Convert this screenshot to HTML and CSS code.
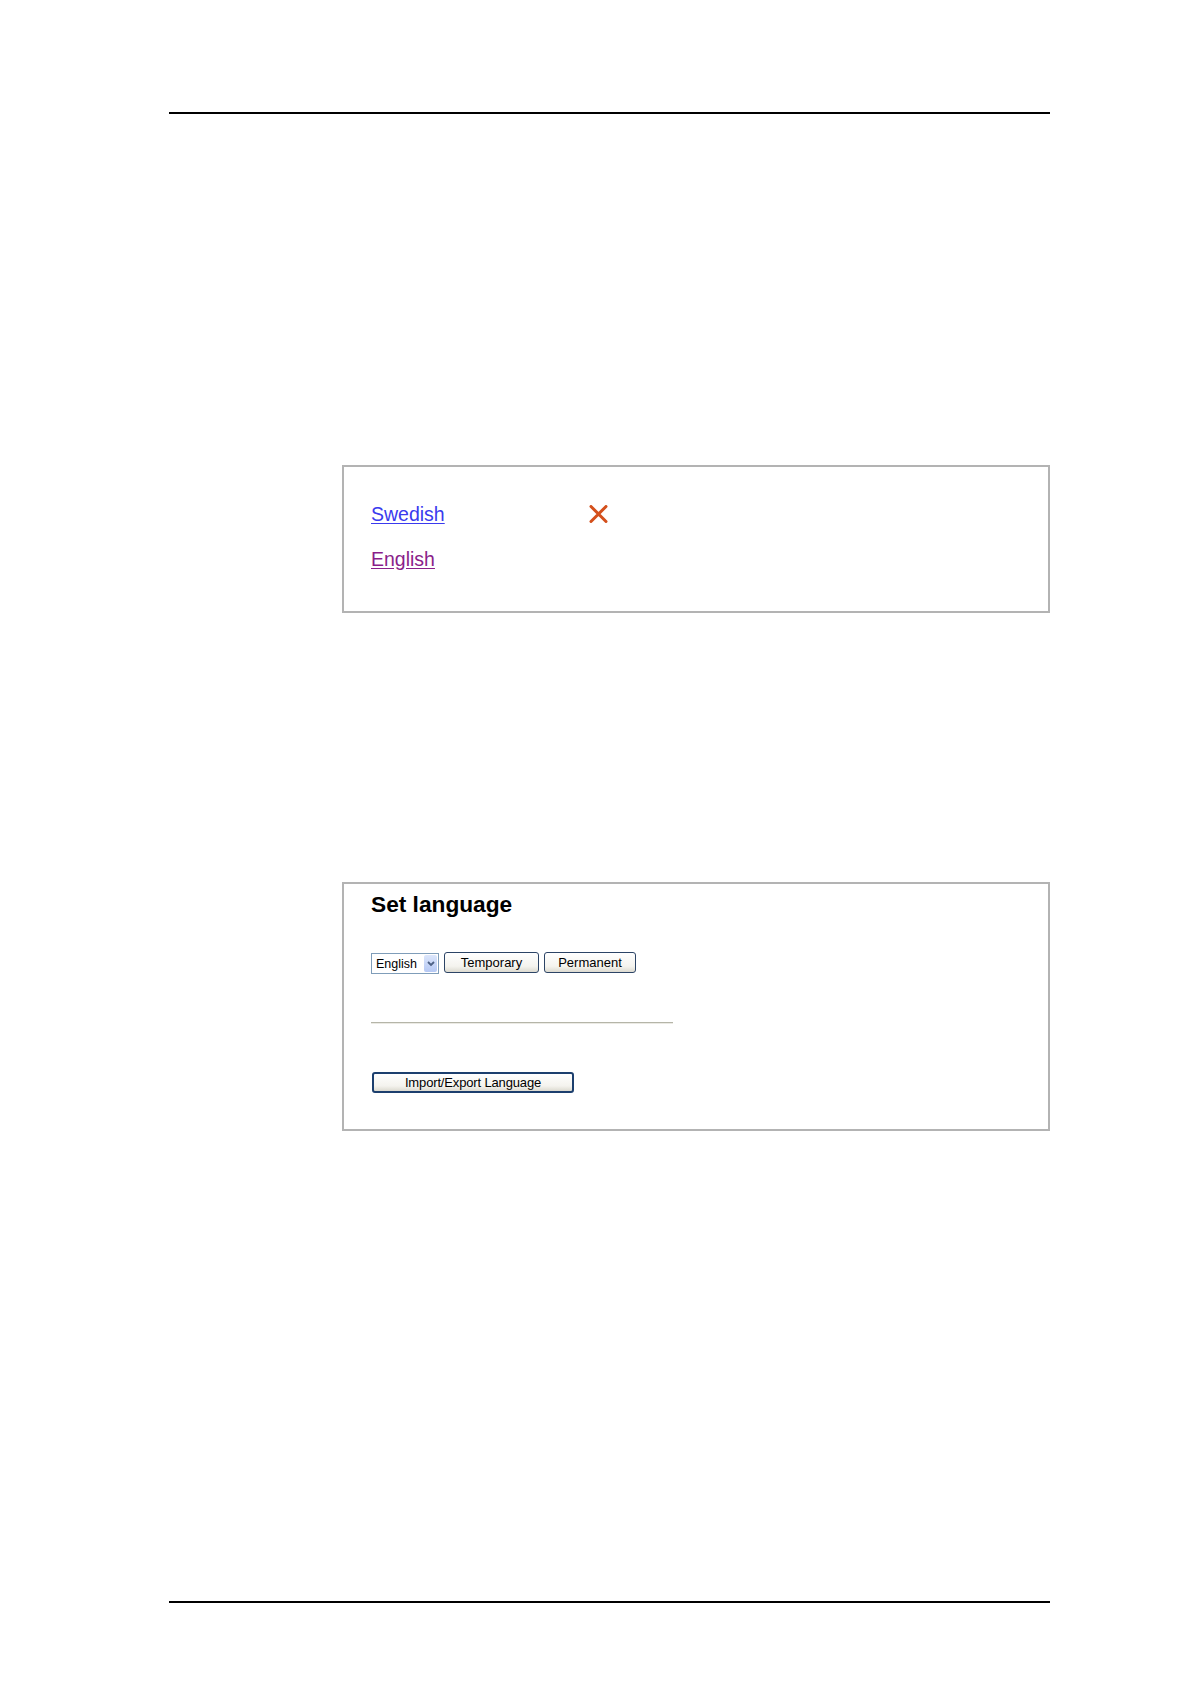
FILE: index.html
```html
<!DOCTYPE html>
<html lang="en">
<head>
  <meta charset="UTF-8">
  <meta name="viewport" content="width=device-width, initial-scale=1.0">
  <title>Set language</title>
  <link rel="stylesheet" href="styles.css">
</head>
<body>
  <div class="page">
    <div class="rule"></div>

    <div class="panel links">
      <div class="lang-row">
        <a href="#" class="lang">Swedish</a>
        <svg class="remove" width="19" height="18" viewBox="0 0 19 18">
          <path d="M2 1.5 L17 16.5 M17 1.5 L2 16.5" stroke="#d4501c" stroke-width="3" stroke-linecap="round"/>
        </svg>
      </div>
      <div class="lang-row">
        <a href="#" class="lang visited">English</a>
      </div>
    </div>

    <div class="panel settings">
      <h2>Set language</h2>
      <div class="controls">
        <div class="select">
          <span class="select-text">English</span>
          <span class="select-arrow">
            <svg width="8" height="6" viewBox="0 0 8 6">
              <path d="M1 1 L4 4 L7 1" fill="none" stroke="#4d6185" stroke-width="1.8"/>
            </svg>
          </span>
        </div>
        <button type="button" class="button temp">Temporary</button>
        <button type="button" class="button perm">Permanent</button>
      </div>
      <div class="divider"></div>
      <button type="button" class="button default">Import/Export Language</button>
    </div>

    <div class="rule bottom"></div>
  </div>
</body>
</html>
```

FILE: styles.css
```css
body {
  margin: 0;
  padding: 0;
  background-color: white;
  font-family: "Liberation Sans", Arial, sans-serif;
}
.page {
  width: 881px;
  margin-left: 169px;
  padding-top: 112px;
}
.rule {
  height: 2px;
  background-color: #000;
}
.rule.bottom {
  margin-top: 470px;
}
.panel {
  box-sizing: border-box;
  width: 708px;
  margin-left: 173px;
  border: 2px solid #b3b3b3;
}
.links {
  margin-top: 351px;
  height: 148px;
  padding: 36px 27px 0;
}
.lang-row {
  display: flex;
  align-items: center;
  height: 23px;
  margin-bottom: 22px;
}
.lang {
  width: 218px;
  font-size: 19.5px;
  line-height: 23px;
  color: #3a3aee;
  text-decoration: underline;
  text-underline-offset: 2px;
}
.lang.visited {
  color: #8a1e8a;
}
.remove {
  display: block;
  margin-top: -2px;
}
.settings {
  margin-top: 269px;
  height: 249px;
  padding: 8px 27px 0;
}
h2 {
  margin: 0;
  font-size: 22.7px;
  line-height: 25px;
  font-weight: bold;
  color: #000;
}
.controls {
  display: flex;
  align-items: flex-start;
  gap: 5px;
  margin-top: 35px;
}
.select {
  box-sizing: border-box;
  display: flex;
  align-items: center;
  width: 68px;
  height: 21px;
  margin-top: 1px;
  border: 1px solid #7f9db9;
  background-color: white;
  padding: 1px;
}
.select-text {
  flex: 1;
  font-size: 12.5px;
  padding-left: 3px;
  color: #000;
}
.select-arrow {
  display: flex;
  align-items: center;
  justify-content: center;
  width: 13px;
  height: 17px;
  background: linear-gradient(#dce6fb, #b5c8f4);
  border-radius: 2px;
}
.button {
  box-sizing: border-box;
  height: 21px;
  padding: 0;
  font-family: "Liberation Sans", Arial, sans-serif;
  font-size: 13px;
  color: #000;
  border: 1px solid #2c4466;
  border-radius: 3px;
  background: linear-gradient(#ffffff, #f4f3ee 70%, #dcdad0);
  cursor: pointer;
}
.temp {
  width: 95px;
}
.perm {
  width: 92px;
}
.divider {
  width: 302px;
  height: 0;
  margin-top: 48px;
  border-top: 1px solid #b5b5a8;
  border-bottom: 1px solid #ebeae4;
}
.default {
  display: block;
  width: 202px;
  margin: 48px 0 0 1px;
  border: 2px solid #1c3f6e;
  letter-spacing: -0.15px;
}
```
